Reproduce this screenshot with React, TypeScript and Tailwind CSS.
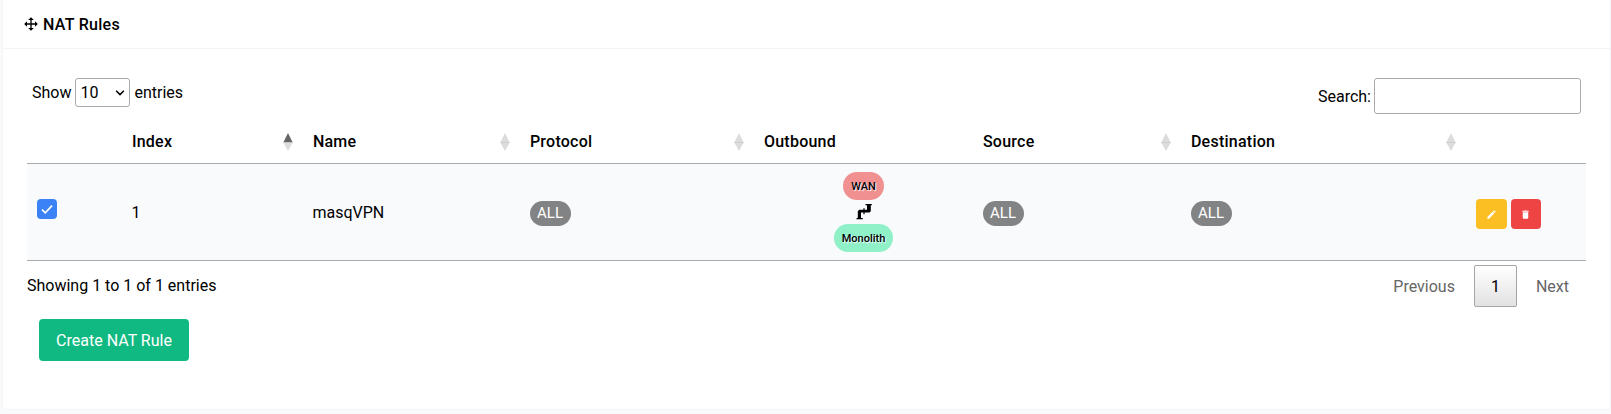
import type { ReactNode } from "react";

function Icon({ d, className }: { d: string; className: string }) {
  return (
    <svg viewBox="0 0 24 24" fill="currentColor" className={className} aria-hidden="true">
      <path d={d} />
    </svg>
  );
}

const MOVE =
  "M13,6V11H18V7.75L22.25,12L18,16.25V13H13V18H16.25L12,22.25L7.75,18H11V13H6V16.25L1.75,12L6,7.75V11H11V6H7.75L12,1.75L16.25,6H13Z";
const PENCIL =
  "M20.71,7.04C21.1,6.65 21.1,6 20.71,5.63L18.37,3.29C18,2.9 17.35,2.9 16.96,3.29L15.12,5.12L18.87,8.87M3,17.25V21H6.75L17.81,9.93L14.06,6.18L3,17.25Z";
const TRASH =
  "M19,4H15.5L14.5,3H9.5L8.5,4H5V6H19M6,19A2,2 0 0,0 8,21H16A2,2 0 0,0 18,19V7H6V19Z";

function SortIcon({ active }: { active?: boolean }) {
  return (
    <svg viewBox="0 0 10 18" className="h-[18px] w-[10px] shrink-0" aria-hidden="true">
      <path d="M5 0L9.7 9.6H.3Z" className={active ? "fill-[#666666]" : "fill-[#dcdcdc]"} />
      <path d="M.3 9.4H9.7L5 18Z" className="fill-[#dcdcdc]" />
      {!active && <path d="M.3 9H9.7V10H.3Z" className="fill-[#cfcfcf]" />}
    </svg>
  );
}

function HeadCell({ label, sort }: { label?: string; sort?: "asc" | "none" }) {
  return (
    <div className="flex items-center justify-between pl-[15.9px] pr-1">
      <span className="pt-[2px] font-medium tracking-[0.25px]">{label}</span>
      {sort && (
        <span className="mt-px">
          <SortIcon active={sort === "asc"} />
        </span>
      )}
    </div>
  );
}

function AllBadge() {
  return (
    <span className="flex h-[25px] w-[41px] items-center justify-center rounded-full bg-[#828384] text-[15px] leading-none text-white">
      ALL
    </span>
  );
}

function Cell({ children }: { children: ReactNode }) {
  return <div className="flex items-center pl-[15.5px] pt-[2px]">{children}</div>;
}

const COLS = "grid grid-cols-[89px_181px_217px_234px_219px_208px_285px_126px]";
const ZONE =
  "flex h-7 items-center justify-center rounded-full text-[11px] font-medium leading-none [text-shadow:1px_1px_1px_#fff]";

export default function App() {
  return (
    <div className="h-[414px] overflow-hidden bg-[#f9fafb] pl-[2px] font-[Roboto,sans-serif] text-base leading-6 text-black">
      <div className="h-[410px] w-[1609px] rounded-b border border-t-0 border-[#f3f4f6] bg-white">
        <header className="flex h-[49px] items-center border-b border-[#f3f4f6] pl-5">
          <Icon d={MOVE} className="mr-1 size-4" />
          <h1 className="pt-px font-medium tracking-[0.3px]">NAT Rules</h1>
        </header>

        <div className="flex h-[67px] items-start justify-between pl-[29px] pr-[29px] pt-[29px]">
          <label className="flex items-center">
            Show
            <span className="relative mx-1 flex">
              <select
                defaultValue="10"
                className="h-[29px] w-[55px] appearance-none rounded-[3px] border border-[#aaaaaa] bg-transparent pl-1"
              >
                <option>10</option>
                <option>25</option>
              </select>
              <svg
                viewBox="0 0 10 6"
                className="pointer-events-none absolute right-[5px] top-[12px] h-[6px] w-[10px]"
                fill="none"
                stroke="black"
                strokeWidth="1.5"
              >
                <path d="M1.2 .8L5 4.6L8.8 .8" />
              </svg>
            </span>
            entries
          </label>
          <label className="flex items-center">
            <span className="pt-px">Search:</span>
            <input type="text" className="ml-[3px] h-9 w-[207px] rounded-[3px] border border-[#aaaaaa]" />
          </label>
        </div>

        <div className="ml-6 w-[1559px]">
          <div className={`${COLS} h-[48px] border-b border-[#acacac] pt-[3px]`}>
            <HeadCell />
            <HeadCell label="Index" sort="asc" />
            <HeadCell label="Name" sort="none" />
            <HeadCell label="Protocol" sort="none" />
            <HeadCell label="Outbound" />
            <HeadCell label="Source" sort="none" />
            <HeadCell label="Destination" sort="none" />
            <HeadCell />
          </div>
          <div className={`${COLS} h-[97px] border-b border-[#acacac] bg-[#f9fafc]`}>
            <div className="flex items-center pb-[7px] pl-[10px]">
              <span className="flex size-5 items-center justify-center rounded bg-[#3b82f6] text-white">
                <svg viewBox="0 0 20 20" className="size-5" fill="none" stroke="currentColor" strokeWidth="1.7">
                  <path d="M5 10.6L8.3 13.9L15 6.7" />
                </svg>
              </span>
            </div>
            <Cell>1</Cell>
            <Cell>masqVPN</Cell>
            <Cell>
              <AllBadge />
            </Cell>
            <div className="flex flex-col items-center pl-4 pr-1 pt-2">
              <span className={`${ZONE} w-[41px] bg-[#f19090]`}>WAN</span>
              <svg viewBox="0 0 16 16" className="my-1 size-4" aria-hidden="true">
                <path d="M9.5 0H15.8V1.3H14.8V7.3L13.6 8.5H5V14H6.8V15.3H.5V14H1.8V7.2L3.2 5.8H11V1.3H9.5Z" />
                <path d="M8 4.3V10.2" stroke="black" strokeWidth="1.2" />
              </svg>
              <span className={`${ZONE} w-[59px] bg-[#90f0c8]`}>Monolith</span>
            </div>
            <Cell>
              <AllBadge />
            </Cell>
            <Cell>
              <AllBadge />
            </Cell>
            <div className="flex items-center gap-1 pl-4 pt-[4px]">
              <button className="flex h-[30px] w-[31px] items-center justify-center rounded bg-[#fbbf24] text-white" aria-label="Edit">
                <Icon d={PENCIL} className="size-[11px]" />
              </button>
              <button className="flex size-[30px] items-center justify-center rounded bg-[#ef4444] text-white" aria-label="Delete">
                <Icon d={TRASH} className="mr-px size-[11px]" />
              </button>
            </div>
          </div>
          <div className="flex h-[46px] items-start justify-between">
            <p className="pt-[13px]">Showing 1 to 1 of 1 entries</p>
            <nav className="flex pt-1 text-[#666666]">
              <span className="px-[17px] pt-[10px]">Previous</span>
              <span className="ml-[2px] flex h-[42px] w-[43px] items-center justify-center rounded-[2px] border border-[#a5a5a5] bg-linear-to-b from-white to-[#e2e2e2] pt-px text-black">
                1
              </span>
              <span className="ml-[2px] px-[17px] pt-[10px]">Next</span>
            </nav>
          </div>
        </div>

        <button className="ml-9 mt-3 h-[42px] w-[150px] rounded bg-[#10b981] pt-px text-white">Create NAT Rule</button>
      </div>
    </div>
  );
}
